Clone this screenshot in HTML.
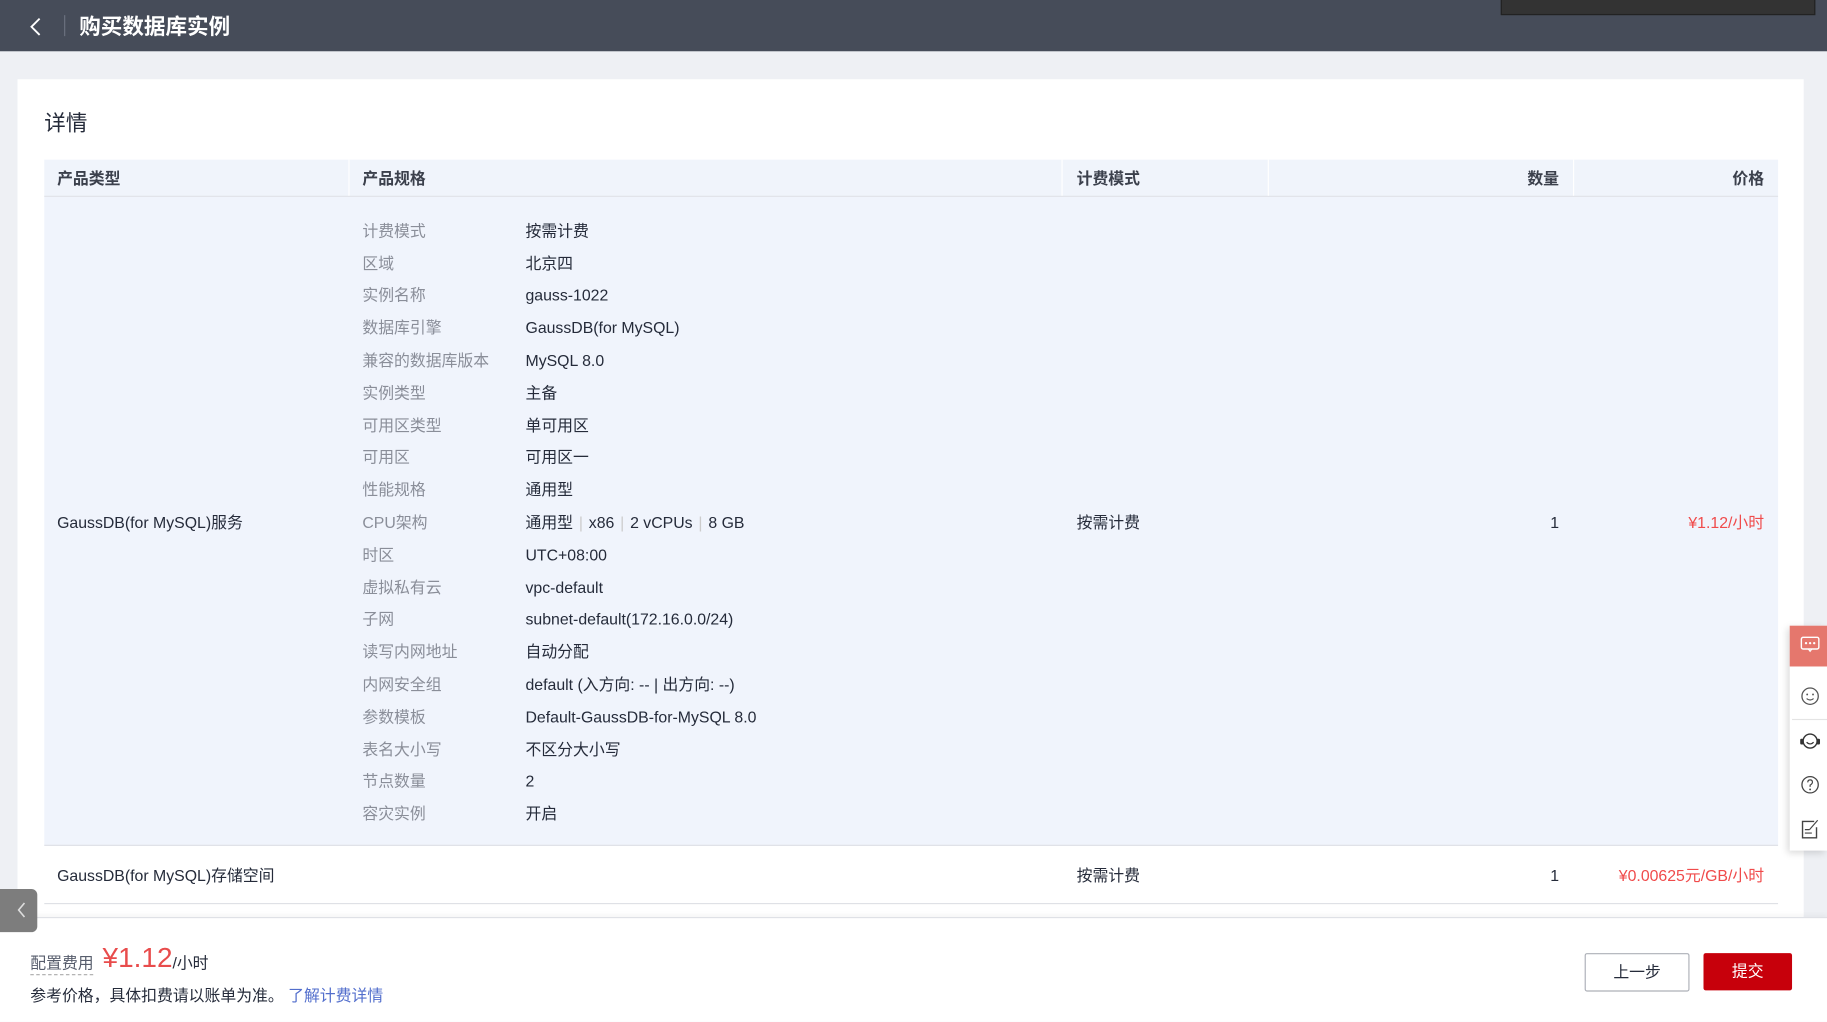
<!DOCTYPE html>
<html><head><meta charset="utf-8"><style>
html,body{margin:0;padding:0;width:1827px;height:1021px;overflow:hidden;background:#eef0f4}
#w{position:absolute;left:0;top:0;width:1568px;height:876px;transform:scale(1.16518);transform-origin:0 0;font-family:"Liberation Sans","Noto Sans CJK SC",sans-serif;font-size:13.6px;color:#252b3a}
.a{position:absolute;white-space:nowrap}
.t{line-height:20px;margin-top:2px}
.hd{left:0;top:0;width:1568px;height:44px;background:#464c59}
.card{left:15px;top:68px;width:1533px;height:760px;background:#fff}
.th{top:137px;height:31px;background:#f0f4fb;border-bottom:1px solid #dfe1e6}
.tx{font-weight:bold;color:#3b404c;top:144px;line-height:20px}
.lb{color:#8a8e99;left:311px;line-height:20px;margin-top:2px}
.vl{left:451px;color:#252b3a;line-height:20px;margin-top:2px}
.red{color:#f04b4b}
.sep{color:#ccc;padding:0 5px}
</style></head><body><div id="w">
<div class="a hd"></div>
<svg class="a" style="left:24px;top:14px" width="14" height="18" viewBox="0 0 14 18"><path d="M10 2L3 9l7 7" fill="none" stroke="#fff" stroke-width="1.6"/></svg>
<div class="a" style="left:55px;top:13px;width:1px;height:18px;background:#6b7180"></div>
<div class="a" style="left:68px;top:10px;font-size:18.5px;font-weight:bold;color:#fff;line-height:26px">购买数据库实例</div>
<div class="a" style="left:1288px;top:-2px;width:268px;height:13px;background:#333;border:1px solid #222"></div>
<div class="a card"></div>
<div class="a" style="left:38px;top:93px;font-size:18.5px;color:#252b3a;line-height:26px">详情</div>
<div class="a th" style="left:38px;width:1488px"></div>
<div class="a" style="left:299px;top:137px;width:1px;height:31px;background:#fff"></div>
<div class="a" style="left:911px;top:137px;width:1px;height:31px;background:#fff"></div>
<div class="a" style="left:1088px;top:137px;width:1px;height:31px;background:#fff"></div>
<div class="a" style="left:1350px;top:137px;width:1px;height:31px;background:#fff"></div>
<div class="a tx" style="left:49px">产品类型</div>
<div class="a tx" style="left:311px">产品规格</div>
<div class="a tx" style="left:924px">计费模式</div>
<div class="a tx" style="right:230px">数量</div>
<div class="a tx" style="right:54px">价格</div>
<div class="a" style="left:38px;top:169px;width:1488px;height:556px;background:#f0f4fc;border-bottom:1px solid #dfe1e6"></div>
<div class="a t" style="left:49px;top:437px">GaussDB(for MySQL)服务</div>
<div class="a t" style="left:924px;top:437px">按需计费</div>
<div class="a t" style="right:230px;top:437px">1</div>
<div class="a t red" style="right:54px;top:437px">¥1.12/小时</div>
<div class="a lb" style="top:187px">计费模式</div><div class="a vl" style="top:187px">按需计费</div>
<div class="a lb" style="top:215px">区域</div><div class="a vl" style="top:215px">北京四</div>
<div class="a lb" style="top:242px">实例名称</div><div class="a vl" style="top:242px">gauss-1022</div>
<div class="a lb" style="top:270px">数据库引擎</div><div class="a vl" style="top:270px">GaussDB(for MySQL)</div>
<div class="a lb" style="top:298px">兼容的数据库版本</div><div class="a vl" style="top:298px">MySQL 8.0</div>
<div class="a lb" style="top:326px">实例类型</div><div class="a vl" style="top:326px">主备</div>
<div class="a lb" style="top:354px">可用区类型</div><div class="a vl" style="top:354px">单可用区</div>
<div class="a lb" style="top:381px">可用区</div><div class="a vl" style="top:381px">可用区一</div>
<div class="a lb" style="top:409px">性能规格</div><div class="a vl" style="top:409px">通用型</div>
<div class="a lb" style="top:437px">CPU架构</div><div class="a vl" style="top:437px">通用型<span class="sep">|</span>x86<span class="sep">|</span>2 vCPUs<span class="sep">|</span>8 GB</div>
<div class="a lb" style="top:465px">时区</div><div class="a vl" style="top:465px">UTC+08:00</div>
<div class="a lb" style="top:493px">虚拟私有云</div><div class="a vl" style="top:493px">vpc-default</div>
<div class="a lb" style="top:520px">子网</div><div class="a vl" style="top:520px">subnet-default(172.16.0.0/24)</div>
<div class="a lb" style="top:548px">读写内网地址</div><div class="a vl" style="top:548px">自动分配</div>
<div class="a lb" style="top:576px">内网安全组</div><div class="a vl" style="top:576px">default (入方向: -- | 出方向: --)</div>
<div class="a lb" style="top:604px">参数模板</div><div class="a vl" style="top:604px">Default-GaussDB-for-MySQL 8.0</div>
<div class="a lb" style="top:632px">表名大小写</div><div class="a vl" style="top:632px">不区分大小写</div>
<div class="a lb" style="top:659px">节点数量</div><div class="a vl" style="top:659px">2</div>
<div class="a lb" style="top:687px">容灾实例</div><div class="a vl" style="top:687px">开启</div>
<div class="a" style="left:38px;top:726px;width:1488px;height:49px;border-bottom:1px solid #dfe1e6"></div>
<div class="a t" style="left:49px;top:740px">GaussDB(for MySQL)存储空间</div>
<div class="a t" style="left:924px;top:740px">按需计费</div>
<div class="a t" style="right:230px;top:740px">1</div>
<div class="a t red" style="right:54px;top:740px">¥0.00625元/GB/小时</div>
<div class="a" style="left:0;top:787px;width:1568px;height:89px;background:#fff;border-top:1px solid #dfe1e6;box-shadow:0 -2px 4px rgba(0,0,0,.04)"></div>
<div class="a" style="left:26px;top:818px;color:#575d6c;border-bottom:1px dashed #aaa;line-height:18px">配置费用</div>
<div class="a" style="left:88px;top:808px;font-size:24px;color:#e84c4c;line-height:30px">¥1.12</div>
<div class="a t" style="left:148px;top:815px;color:#252b3a">/小时</div>
<div class="a t" style="left:26px;top:843px">参考价格，具体扣费请以账单为准。 <span style="color:#526ecc">了解计费详情</span></div>
<div class="a" style="left:1360px;top:818px;width:88px;height:31px;border:1px solid #adb0b8;border-radius:2px;background:#fff;text-align:center;line-height:31px">上一步</div>
<div class="a" style="left:1462px;top:818px;width:76px;height:32px;background:#c7000b;border-radius:2px;color:#fff;text-align:center;line-height:32px">提交</div>
<div class="a" style="left:0;top:763px;width:32px;height:37px;background:#7d7d7d;border-radius:0 5px 5px 0"></div>
<svg class="a" style="left:13px;top:773px" width="10" height="16"><path d="M8 2L3 8l5 6" fill="none" stroke="#ddd" stroke-width="1.4"/></svg>
<div class="a" style="left:1536px;top:537px;width:32px;height:193px;background:#fff;box-shadow:-2px 2px 6px rgba(0,0,0,.15)"></div>
<div class="a" style="left:1536px;top:537px;width:32px;height:35px;background:#e5776d"></div>
<svg class="a" style="left:1545px;top:546px" width="17" height="16"><rect x="1" y="1" width="15" height="10" rx="1.5" fill="none" stroke="#fff" stroke-width="1.2"/><path d="M7 11l1.5 2 1.5-2" fill="none" stroke="#fff"/><circle cx="5" cy="6" r="1" fill="#fff"/><circle cx="8.5" cy="6" r="1" fill="#fff"/><circle cx="12" cy="6" r="1" fill="#fff"/></svg>
<svg class="a" style="left:1545px;top:589px" width="17" height="17"><circle cx="8.5" cy="8.5" r="7" fill="none" stroke="#555" stroke-width="1.1"/><circle cx="6" cy="7" r=".8" fill="#555"/><circle cx="11" cy="7" r=".8" fill="#555"/><path d="M5.5 10.5q3 2.5 6 0" fill="none" stroke="#555"/></svg>
<div class="a" style="left:1538px;top:617px;width:30px;height:1px;background:#e4e4e4"></div>
<svg class="a" style="left:1544px;top:627px" width="19" height="18"><circle cx="9.5" cy="9" r="6" fill="none" stroke="#333" stroke-width="1.2"/><path d="M6.5 10q3 3 6 0" fill="none" stroke="#333"/><rect x="1" y="7" width="3" height="5" rx="1" fill="#333"/><rect x="15" y="7" width="3" height="5" rx="1" fill="#333"/></svg>
<svg class="a" style="left:1545px;top:665px" width="17" height="17"><circle cx="8.5" cy="8.5" r="7" fill="none" stroke="#444" stroke-width="1.1"/><path d="M6.5 6.5q0-2.2 2-2.2t2 2q0 1.5-2 2.5v1.5" fill="none" stroke="#444"/><circle cx="8.5" cy="12.5" r=".8" fill="#444"/></svg>
<svg class="a" style="left:1545px;top:702px" width="17" height="18"><path d="M12 3H2v14h12V8" fill="none" stroke="#444" stroke-width="1.2"/><path d="M8 10l7-8" stroke="#444"/><path d="M4 10h4M4 13h6" stroke="#444"/></svg>
</div></body></html>
